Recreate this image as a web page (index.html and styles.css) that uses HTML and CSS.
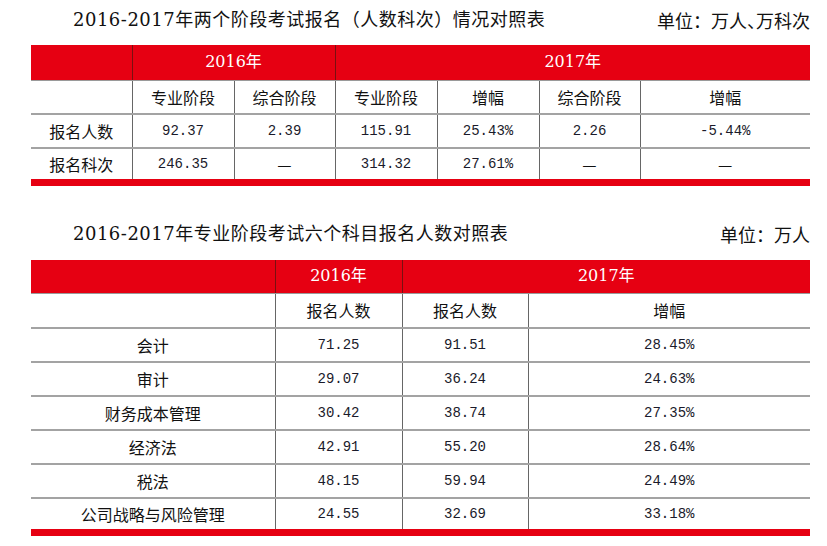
FILE: index.html
```html
<!DOCTYPE html>
<html lang="zh-CN">
<head>
<meta charset="utf-8">
<title>2016-2017年报名对照表</title>
<link rel="stylesheet" href="styles.css">
</head>
<body>
<div class="page">
  <div class="title-row">
    <h1 class="title">2016-2017年两个阶段考试报名（人数科次）情况对照表</h1>
    <div class="unit">单位：万人<span class="narrow">、</span>万科次</div>
  </div>
  <table class="grid grid-a">
    <colgroup>
      <col class="c101"><col class="c102"><col class="c101"><col class="c102"><col class="c102"><col class="c101"><col>
    </colgroup>
    <tr class="head">
      <th></th>
      <th colspan="2">2016年</th>
      <th colspan="4">2017年</th>
    </tr>
    <tr>
      <td></td><td>专业阶段</td><td>综合阶段</td><td>专业阶段</td><td>增幅</td><td>综合阶段</td><td>增幅</td>
    </tr>
    <tr>
      <td>报名人数</td><td class="n">92.37</td><td class="n">2.39</td><td class="n">115.91</td><td class="n">25.43%</td><td class="n">2.26</td><td class="n">-5.44%</td>
    </tr>
    <tr class="last">
      <td>报名科次</td><td class="n">246.35</td><td>—</td><td class="n">314.32</td><td class="n">27.61%</td><td>—</td><td>—</td>
    </tr>
  </table>

  <div class="title-row second">
    <h1 class="title">2016-2017年专业阶段考试六个科目报名人数对照表</h1>
    <div class="unit">单位：万人</div>
  </div>
  <table class="grid grid-b">
    <colgroup>
      <col class="c244"><col class="c127"><col class="c126"><col>
    </colgroup>
    <tr class="head">
      <th></th>
      <th>2016年</th>
      <th colspan="2">2017年</th>
    </tr>
    <tr><td></td><td>报名人数</td><td>报名人数</td><td>增幅</td></tr>
    <tr><td>会计</td><td class="n">71.25</td><td class="n">91.51</td><td class="n">28.45%</td></tr>
    <tr><td>审计</td><td class="n">29.07</td><td class="n">36.24</td><td class="n">24.63%</td></tr>
    <tr><td>财务成本管理</td><td class="n">30.42</td><td class="n">38.74</td><td class="n">27.35%</td></tr>
    <tr><td>经济法</td><td class="n">42.91</td><td class="n">55.20</td><td class="n">28.64%</td></tr>
    <tr><td>税法</td><td class="n">48.15</td><td class="n">59.94</td><td class="n">24.49%</td></tr>
    <tr class="last"><td>公司战略与风险管理</td><td class="n">24.55</td><td class="n">32.69</td><td class="n">33.18%</td></tr>
  </table>
</div>
</body>
</html>
```

FILE: styles.css
```css
html, body {
  margin: 0;
  padding: 0;
  background: #ffffff;
}

.page {
  width: 779px;
  padding-left: 31px;
  color: #111111;
  font-family: "Noto Sans CJK SC", sans-serif;
}

.title-row {
  display: flex;
  justify-content: space-between;
  align-items: center;
  height: 40px;
  padding-left: 42px;
  margin-bottom: 5px;
}

.title-row.second {
  margin-top: 28px;
  margin-bottom: 6px;
}

.title {
  margin: 0;
  font-family: "DejaVu Serif", "Noto Sans CJK SC", serif;
  font-size: 18px;
  font-weight: normal;
  line-height: 24px;
  letter-spacing: 0.5px;
  color: #111111;
}

.unit {
  font-family: "Noto Sans CJK SC", sans-serif;
  font-size: 18px;
  line-height: 24px;
  color: #111111;
}

.narrow {
  letter-spacing: -9px;
}

.grid {
  width: 779px;
  border-collapse: collapse;
  table-layout: fixed;
}

.c101 { width: 101px; }
.c102 { width: 102px; }
.c244 { width: 244px; }
.c127 { width: 127px; }
.c126 { width: 126px; }

.grid th,
.grid td {
  padding: 0;
  text-align: center;
  vertical-align: middle;
  border-left: 1px solid #666666;
  border-bottom: 2px solid #a3a3a3;
  font-size: 16px;
  line-height: 20px;
  font-weight: normal;
}

.grid th:first-child,
.grid td:first-child {
  border-left: none;
}

.grid .head th {
  background: #e60012;
  color: #ffffff;
  font-family: "DejaVu Serif", "Noto Sans CJK SC", serif;
  font-size: 16px;
  border-left-color: #7a1010;
  border-bottom: 1px solid #9a9a9a;
}

.grid-a .head { height: 35px; }
.grid-a tr { height: 34px; }
.grid-a .last { height: 34px; }

.grid-b .head { height: 34px; }
.grid-b tr { height: 34px; }
.grid-b .last { height: 35px; }

.grid .last td {
  border-bottom: 7px solid #e60012;
}

.grid td.n {
  font-family: "Liberation Mono", "DejaVu Sans Mono", monospace;
  font-size: 14px;
  color: #1a1a2a;
}
```
